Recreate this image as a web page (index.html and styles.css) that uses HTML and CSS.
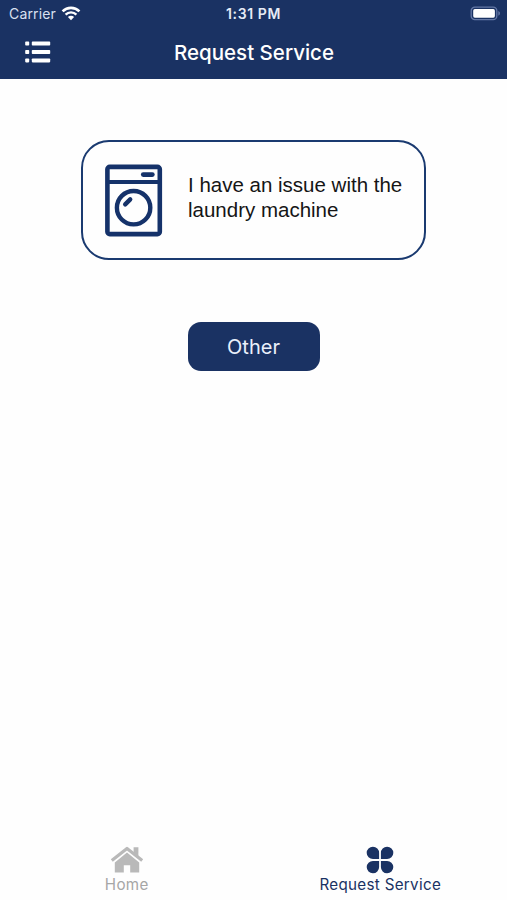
FILE: index.html
```
<!DOCTYPE html>
<html lang="en">
<head>
    <meta charset="UTF-8">
    <meta name="viewport" content="width=device-width, initial-scale=1.0">
    <title>Request Service</title>
    <link rel="stylesheet" href="styles.css">
</head>
<body>
    <header class="header">
        <div class="status-bar">
            <div class="carrier">
                <span class="carrier-name">Carrier</span>
                <svg class="wifi" width="20" height="15" viewBox="0 0 20 15">
                    <path d="M1.6 5.4a12 12 0 0 1 16.8 0" fill="none" stroke="#fff" stroke-width="2.7"/>
                    <path d="M4.6 8.6a7.7 7.7 0 0 1 10.8 0" fill="none" stroke="#fff" stroke-width="2.4"/>
                    <path d="M10 14.2L6.9 11a4.4 4.4 0 0 1 6.2 0z" fill="#fff"/>
                </svg>
            </div>
            <span class="time">1:31 PM</span>
            <svg class="battery" width="31" height="16" viewBox="0 0 31 16">
                <rect x="1.2" y="1.2" width="25.6" height="12.4" rx="3.6" fill="none" stroke="#6478a6" stroke-width="1.3"/>
                <rect x="3.2" y="3.1" width="21.7" height="8.6" rx="1.6" fill="#fff"/>
                <path d="M28.3 5.1c2.2.8 2.2 3.8 0 4.6z" fill="#6478a6"/>
            </svg>
        </div>
        <div class="nav-bar">
            <button class="menu-btn" aria-label="Menu">
                <svg width="26" height="22" viewBox="0 0 26 22" fill="#fff">
                    <rect x="0.2" y="0.6" width="4" height="4" rx="0.8"/>
                    <rect x="6.8" y="0.6" width="18.4" height="4" rx="0.8"/>
                    <rect x="0.2" y="9" width="4" height="4" rx="0.8"/>
                    <rect x="6.8" y="9" width="18.4" height="4" rx="0.8"/>
                    <rect x="0.2" y="17.4" width="4" height="4" rx="0.8"/>
                    <rect x="6.8" y="17.4" width="18.4" height="4" rx="0.8"/>
                </svg>
            </button>
            <h1>Request Service</h1>
        </div>
    </header>

    <main class="content">
        <div class="issue-card">
            <svg class="washer" width="58" height="73" viewBox="0 0 58 73" fill="none" stroke="#15326a">
                <rect x="2.4" y="2.9" width="52.4" height="67.2" rx="2.4" stroke-width="4.6"/>
                <path d="M2.4 18h52.4" stroke-width="4.2"/>
                <path d="M38.2 10.6h9.2" stroke-width="4.6" stroke-linecap="round"/>
                <circle cx="28.6" cy="43.7" r="16.7" stroke-width="4.4"/>
                <path d="M20.2 40.4l5-5" stroke-width="4.4" stroke-linecap="round"/>
            </svg>
            <p>I have an issue with the laundry machine</p>
        </div>
        <button class="other-btn">Other</button>
    </main>

    <nav class="tab-bar">
        <a class="tab" href="#">
            <svg width="34" height="28" viewBox="0 0 34 28" fill="#b9b9b9">
                <path d="M23.6 1.2h4.8v10l-4.8-4z"/>
                <path d="M1.8 14.6L17 2.4l15.2 12.2" fill="none" stroke="#b9b9b9" stroke-width="3.2" stroke-linejoin="round"/>
                <path d="M17 6.6l12.2 9.8v10.2h-9v-7.4h-6.4v7.4H4.8V16.4z"/>
            </svg>
            <span>Home</span>
        </a>
        <a class="tab active" href="#">
            <svg width="28" height="28" viewBox="0 0 28 28" fill="#1a3263">
                <path d="M13.1 13.1H7A6.2 6.2 0 1 1 13.1 7z"/>
                <path d="M14.9 13.1H21A6.2 6.2 0 1 0 14.9 7z"/>
                <path d="M13.1 14.9H7A6.2 6.2 0 1 0 13.1 21z"/>
                <path d="M14.9 14.9H21A6.2 6.2 0 1 1 14.9 21z"/>
            </svg>
            <span>Request Service</span>
        </a>
    </nav>
</body>
</html>
```

FILE: styles.css
```
* {
    box-sizing: border-box;
}
body {
    font-family: Inter, 'Liberation Sans', sans-serif;
    margin: 0;
    height: 100vh;
    display: flex;
    flex-direction: column;
    background-color: #fefefe;
}
button {
    font-family: inherit;
    border: none;
    padding: 0;
    cursor: pointer;
}
svg {
    display: block;
}
.header {
    height: 79px;
    background-color: #1a3263;
    color: white;
}
.status-bar {
    height: 27px;
    padding: 0 6px;
    display: grid;
    grid-template-columns: 1fr auto 1fr;
    align-items: center;
}
.carrier {
    display: flex;
    align-items: center;
    gap: 5px;
    padding-left: 3px;
}
.carrier-name {
    font-size: 14px;
    letter-spacing: 0.15px;
    color: #d9e0f0;
}
.time {
    font-size: 14px;
    font-weight: 600;
    letter-spacing: 0.6px;
    color: #e6ebf6;
}
.battery {
    justify-self: end;
}
.nav-bar {
    height: 50px;
    padding: 0 24px 0 25px;
    display: grid;
    grid-template-columns: 1fr auto 1fr;
    align-items: center;
}
.menu-btn {
    background: none;
    justify-self: start;
}
.nav-bar h1 {
    margin: 0;
    font-size: 20.5px;
    font-weight: 500;
}
.content {
    flex: 1;
    display: flex;
    flex-direction: column;
    align-items: center;
    gap: 62px;
    padding-top: 61px;
}
.issue-card {
    width: 345px;
    height: 120px;
    padding: 0 18px 0 22px;
    display: flex;
    align-items: center;
    gap: 25px;
    border: 2px solid #1a3a70;
    border-radius: 28px;
}
.washer {
    flex-shrink: 0;
}
.issue-card p {
    width: 218px;
    margin: 0 0 6px;
    font-family: 'Liberation Sans', Arial, sans-serif;
    font-size: 20.5px;
    line-height: 25px;
    color: #151515;
}
.other-btn {
    width: 132px;
    height: 49px;
    background-color: #1a3263;
    color: #eaf0fb;
    font-size: 20px;
    border-radius: 13px;
}
.tab-bar {
    display: flex;
    height: 54px;
}
.tab {
    flex: 1;
    display: flex;
    flex-direction: column;
    align-items: center;
    color: #a6a6a6;
    font-size: 15.2px;
    letter-spacing: 0.3px;
    line-height: 21px;
    text-decoration: none;
}
.tab.active {
    color: #1a3263;
}
```
